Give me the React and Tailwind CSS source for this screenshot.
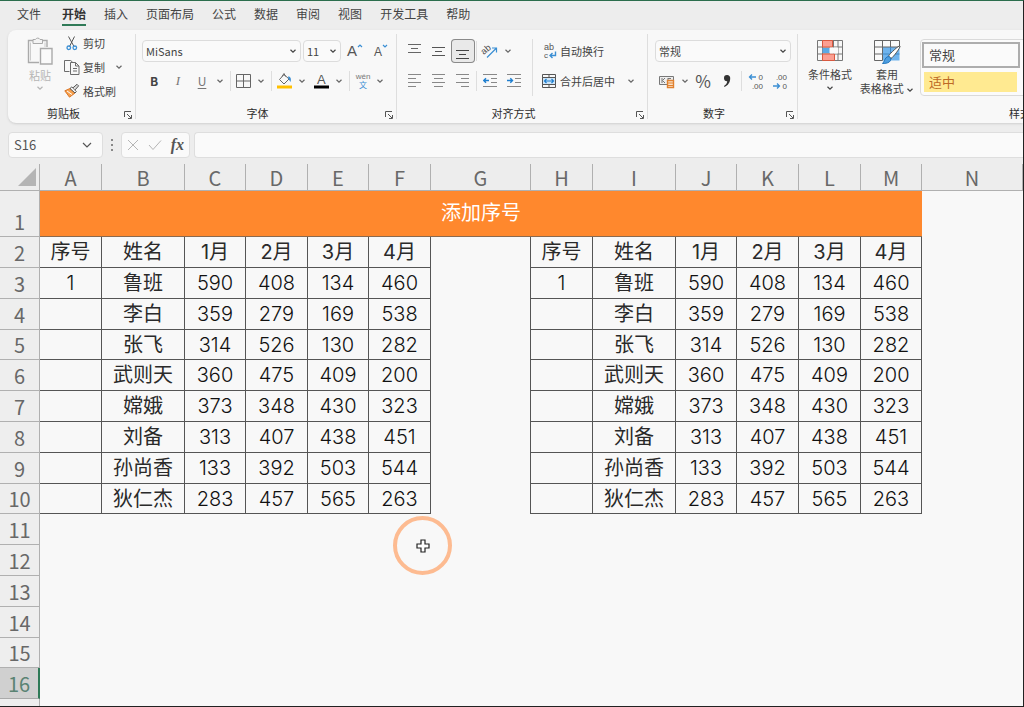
import { useState } from 'react'

const tabs = ['开始', '插入', '页面布局', '公式', '数据', '审阅', '视图', '开发工具', '帮助']

const columns = [
  { name: 'A', width: 'w-[62px]' },
  { name: 'B', width: 'w-[83px]' },
  { name: 'C', width: 'w-[61px]' },
  { name: 'D', width: 'w-[62px]' },
  { name: 'E', width: 'w-[61px]' },
  { name: 'F', width: 'w-[62px]' },
  { name: 'G', width: 'w-[100px]' },
  { name: 'H', width: 'w-[62px]' },
  { name: 'I', width: 'w-[83px]' },
  { name: 'J', width: 'w-[61px]' },
  { name: 'K', width: 'w-[62px]' },
  { name: 'L', width: 'w-[62px]' },
  { name: 'M', width: 'w-[61px]' },
  { name: 'N', width: '' },
]

const people = [
  ['序号', '姓名', '1月', '2月', '3月', '4月'],
  [1, '鲁班', 590, 408, 134, 460],
  ['', '李白', 359, 279, 169, 538],
  ['', '张飞', 314, 526, 130, 282],
  ['', '武则天', 360, 475, 409, 200],
  ['', '嫦娥', 373, 348, 430, 323],
  ['', '刘备', 313, 407, 438, 451],
  ['', '孙尚香', 133, 392, 503, 544],
  ['', '狄仁杰', 283, 457, 565, 263],
]

const emptyRows = [11, 12, 13, 14, 15, 16]

function Chevron({ className = '' }) {
  return (
    <svg viewBox="0 0 8 8" className={`w-2 h-2 ${className}`} fill="none" stroke="currentColor" strokeWidth="1.2">
      <path d="M1.5 2.8 4 5.2 6.5 2.8" />
    </svg>
  )
}

function IconButton({ label, active, children }) {
  return (
    <button
      type="button"
      aria-label={label}
      className={`w-6 h-6 flex items-center justify-center rounded ${active ? 'bg-[#e9e9e9] ring-1 ring-inset ring-[#8a8a8a]' : ''}`}
    >
      {children}
    </button>
  )
}

function MenuButton({ label }) {
  return (
    <button type="button" aria-label={label} className="w-3 h-6 flex items-center justify-center text-[#666]">
      <Chevron />
    </button>
  )
}

function SplitButton({ label, children }) {
  return (
    <div className="flex gap-[3px]">
      <button type="button" aria-label={label} className="w-4 h-6 flex items-center justify-center">{children}</button>
      <MenuButton label={`${label}选项`} />
    </div>
  )
}

function Divider({ className }) {
  return <div className={`w-px shrink-0 bg-[#dedede] ${className}`} />
}

function Select({ label, width, value, options }) {
  const [current, setCurrent] = useState(value)
  return (
    <div className={`relative ${width}`}>
      <select
        aria-label={label}
        value={current}
        onChange={e => setCurrent(e.target.value)}
        className="block appearance-none w-full h-[22px] pl-[3px] rounded border border-[#dcdcdc] bg-[#fafafa] text-[11px] outline-none"
      >
        {options.map(o => <option key={o}>{o}</option>)}
      </select>
      <Chevron className="absolute right-1 top-[7px] pointer-events-none" />
    </div>
  )
}

function Group({ title, width, launcher = true, children }) {
  return (
    <section aria-label={title} className={`relative shrink-0 flex flex-col ${width}`}>
      <div className="h-[73px]">{children}</div>
      <div className="h-5 pr-4 flex items-center">
        <span className="flex-1 text-center text-[11px] text-[#2d2d2d]">{title}</span>
      </div>
      {launcher && (
        <button type="button" aria-label={`${title}设置`} className="absolute right-[3px] bottom-1">
          <svg viewBox="0 0 8 8" className="w-2 h-2" fill="none" stroke="#555">
            <path d="M.5 6V.5H7M3 3l4 4M7.5 4v3.5H4" />
          </svg>
        </button>
      )}
    </section>
  )
}

function Clipboard() {
  return (
    <Group title="剪贴板" width="w-[127px]">
      <div className="flex pt-px">
        <button type="button" className="w-[56px] pl-2 flex flex-col items-center pt-[5px] text-[11px] text-[#b5b5b5]">
          <svg viewBox="0 0 26 30" className="w-[26px] h-[30px]" fill="none" stroke="#aaa">
            <path d="M12 26.500H1.500V4.500H6M15 4.500h5V11" strokeWidth="1.400" />
            <path d="M3.500 24.500V6.500M18 6.500V11" stroke="#ccc" />
            <path d="M6 7.500V3.500h2.500a2.500 2.500 0 0 1 4.500 0H15.500v4z" fill="#f3f3f3" />
            <path d="M13.500 12.500h11.500v15.500h-11.500z" fill="#fafafa" strokeWidth="1.400" />
          </svg>
          <span className="leading-[18px]">粘贴</span>
          <Chevron />
        </button>
        <div className="flex flex-col text-[11px]">
          <button type="button" className="h-6 flex items-center gap-[3px]">
            <svg viewBox="0 0 16 16" className="w-4 h-4" fill="none">
              <path d="M4.500 1.500 10 11.500M10.500 1.500 5.500 11.500" stroke="#555" />
              <circle cx="4.800" cy="12.800" r="1.800" stroke="#3b8fd4" strokeWidth="1.300" />
              <circle cx="10.800" cy="12.800" r="1.800" stroke="#3b8fd4" strokeWidth="1.300" />
            </svg>
            剪切
          </button>
          <div className="flex">
            <button type="button" className="h-6 flex items-center gap-[3px]">
              <svg viewBox="0 0 16 16" className="w-4 h-4" fill="none" stroke="#6c6c6c">
                <path d="M5.500 12.500h-5v-11h6l2 1.500" />
                <path d="M6.500 3.500h5l3.500 3.500v8.500H6.500zM11.500 3.500V7H15M9 9.500h4M9 12h4" />
              </svg>
              复制
            </button>
            <span className="ml-2"><MenuButton label="复制选项" /></span>
          </div>
          <button type="button" className="h-6 flex items-center gap-[3px]">
            <svg viewBox="0 0 16 16" className="w-4 h-4" fill="none">
              <path d="M6 5.500.8 7.800l4.700 6.400L11 10z" fill="#f6a04d" stroke="#d9772b" />
              <path d="m6 5.500 1.800-1.600 4.500 4.700L11 10z" fill="#fff" stroke="#555" />
              <path d="m9 4.800 4-3.500 1.600 1.600-3.500 4" fill="#ddd" stroke="#555" />
              <path d="m3 8 5 3.500" stroke="#fff" />
            </svg>
            格式刷
          </button>
        </div>
      </div>
    </Group>
  )
}

function FontGroup() {
  return (
    <Group title="字体" width="w-[261px]">
      <div className="pl-[7px] pt-[10px] flex flex-col gap-[7px]">
        <div className="h-[22px] flex items-center gap-[2px]">
          <Select label="字体名称" width="w-[159px]" value="MiSans" options={['MiSans', 'Arial']} />
          <Select label="字号" width="w-[38px]" value="11" options={['10', '11', '12']} />
          <IconButton label="增大字号">
            <svg viewBox="0 0 18 20" className="w-[18px] h-5 font-['Liberation_Sans',sans-serif]">
              <text x="1" y="15" fontSize="15" fill="#555">A</text>
              <path d="m12 6 2-2 2 2" fill="none" stroke="#3b8fd4" strokeWidth="1.200" />
            </svg>
          </IconButton>
          <IconButton label="减小字号">
            <svg viewBox="0 0 18 20" className="w-[18px] h-5 font-['Liberation_Sans',sans-serif]">
              <text x="2" y="15" fontSize="12" fill="#555">A</text>
              <path d="m11 4 2 2 2-2" fill="none" stroke="#3b8fd4" strokeWidth="1.200" />
            </svg>
          </IconButton>
        </div>
        <div className="h-6 flex items-center">
          <IconButton label="加粗"><b className="text-xs">B</b></IconButton>
          <IconButton label="倾斜"><i className="text-[13px] text-[#777] font-['Liberation_Serif',serif]">I</i></IconButton>
          <IconButton label="下划线"><u className="text-xs text-[#777] underline-offset-2">U</u></IconButton>
          <MenuButton label="下划线选项" />
          <Divider className="ml-1 mr-[5px] h-5" />
          <SplitButton label="边框">
            <svg viewBox="0 0 16 16" className="w-4 h-4" fill="none" stroke="#666">
              <path d="M.5 1.500h14v13H.5zM7.500 1.500v13M.5 8h14" />
            </svg>
          </SplitButton>
          <Divider className="ml-1 mr-[5px] h-5" />
          <div className="flex gap-[6px]">
            <SplitButton label="填充颜色">
              <svg viewBox="0 0 16 18" className="w-4 h-[18px]" fill="none">
                <path d="M7 2.500 12 7l-5 5-4.500-4.500zM5 4.500l2-3 1.500 3" stroke="#666" />
                <path d="M11 4.500c2.500 0 3.500 2 2.500 5.500L11.500 7z" fill="#3b8fd4" />
                <path d="M0 13.500h15v3H0z" fill="#ffc000" />
              </svg>
            </SplitButton>
            <SplitButton label="字体颜色">
              <svg viewBox="0 0 16 18" className="w-4 h-[18px] font-['Liberation_Sans',sans-serif]">
                <text x="3" y="12" fontSize="13" fill="#555">A</text>
                <path d="M0 13.500h15v3H0z" fill="#000" />
              </svg>
            </SplitButton>
          </div>
          <Divider className="ml-1 mr-[5px] h-5" />
          <SplitButton label="拼音">
            <span className="flex flex-col items-center text-[8px] leading-[9px] text-[#777] font-['Liberation_Sans','Noto_Sans_CJK_SC',sans-serif]">
              wén<span className="text-[#3b8fd4]">文</span>
            </span>
          </SplitButton>
        </div>
      </div>
    </Group>
  )
}

function Lines({ d, color = '#888' }) {
  return (
    <svg viewBox="0 0 14 16" className="w-[14px] h-4" fill="none" stroke={color}>
      <path d={d} />
    </svg>
  )
}

function Alignment() {
  return (
    <Group title="对齐方式" width="w-[251px]">
      <div className="flex pl-[7px] pt-[9px]">
        <div className="flex flex-col gap-[6px]">
          <div className="flex items-center">
            <IconButton label="顶端对齐"><Lines color="#666" d="M0 1.500h13M3 5.500h7M0 9.500h13" /></IconButton>
            <IconButton label="垂直居中"><Lines color="#555" d="M0 4.500h13M3 8.500h7M0 12.500h13" /></IconButton>
            <IconButton label="底端对齐" active><Lines color="#444" d="M0 7.500h13M3 11.500h7M0 15.500h13" /></IconButton>
            <Divider className="mx-px h-5" />
            <IconButton label="方向">
              <svg viewBox="0 0 20 20" className="w-5 h-5 font-['Liberation_Sans',sans-serif]" fill="none">
                <text x="2" y="11" fontSize="9" fill="#444" transform="rotate(-40 7 10)">ab</text>
                <path d="M7 16.500 16 7.500M12 7h4.500v4.500" stroke="#3b8fd4" strokeWidth="1.200" />
              </svg>
            </IconButton>
            <MenuButton label="方向选项" />
          </div>
          <div className="flex items-center">
            <IconButton label="左对齐"><Lines d="M0 1.500h13M0 5.500h8M0 9.500h13M0 13.500h8" /></IconButton>
            <IconButton label="居中"><Lines d="M0 1.500h13M2 5.500h9M0 9.500h13M2 13.500h9" /></IconButton>
            <IconButton label="右对齐"><Lines d="M0 1.500h13M5 5.500h8M0 9.500h13M5 13.500h8" /></IconButton>
            <Divider className="mx-px h-5" />
            <IconButton label="减少缩进量">
              <svg viewBox="0 0 14 16" className="w-[14px] h-4" fill="none" stroke="#888">
                <path d="M0 1.500h14M8 5.500h6M8 9.500h6M0 13.500h14" />
                <path d="M6 7.500H.8M3 5.200.8 7.500 3 9.800" stroke="#1f7fd0" strokeWidth="1.400" />
              </svg>
            </IconButton>
            <IconButton label="增加缩进量">
              <svg viewBox="0 0 14 16" className="w-[14px] h-4" fill="none" stroke="#888">
                <path d="M0 1.500h14M8 5.500h6M8 9.500h6M0 13.500h14" />
                <path d="M0 7.500h5.500M3.300 5.200l2.200 2.300-2.200 2.300" stroke="#1f7fd0" strokeWidth="1.400" />
              </svg>
            </IconButton>
          </div>
        </div>
        <Divider className="ml-[6px] mr-2 h-[57px]" />
        <div className="flex flex-col gap-[6px] text-[11px]">
          <button type="button" className="h-6 flex items-center gap-[3px]">
            <svg viewBox="0 0 16 20" className="w-4 h-5 font-['Liberation_Sans',sans-serif]" fill="none">
              <text x="3" y="9" fontSize="9" fill="#555">ab</text>
              <text x="3" y="17" fontSize="8" fill="#555">c</text>
              <path d="M14.500 10.500V14.500H9M11.500 12l-2.500 2.500 2.500 2.500" stroke="#3b8fd4" strokeWidth="1.400" />
            </svg>
            自动换行
          </button>
          <div className="flex">
            <button type="button" className="h-6 flex items-center gap-[3px]">
              <svg viewBox="0 0 16 16" className="w-4 h-4" fill="none" stroke="#555">
                <path d="M1.500 1.500h13v13h-13zM8 1.500v3M8 11.500v3" />
                <path d="M1.500 4.500h13v7h-13z" fill="#cfe6f8" />
                <path d="M3.500 8h9M5.500 6l-2 2 2 2M10.500 6l2 2-2 2" stroke="#1f7fd0" strokeWidth="1.200" />
              </svg>
              合并后居中
            </button>
            <span className="ml-[10px]"><MenuButton label="合并选项" /></span>
          </div>
        </div>
      </div>
    </Group>
  )
}

function NumberGroup() {
  return (
    <Group title="数字" width="w-[150px]">
      <div className="pl-2 pt-[10px] flex flex-col gap-[7px]">
        <Select label="数字格式" width="w-[136px]" value="常规" options={['常规', '数值', '货币']} />
        <div className="h-6 flex items-center">
          <IconButton label="会计数字格式">
            <svg viewBox="0 0 16 16" className="w-4 h-4" fill="none">
              <path d="M.5 3.500h14v8H.5z" stroke="#777" fill="#eee" />
              <path d="M3 5v5M6 5 3.500 7.500 6 10M9 5v5M12 5.500H9" stroke="#777" />
              <path d="M8.500 7.500h6v7h-6z" fill="#fde3c8" stroke="#e0812f" strokeWidth="1.400" />
              <path d="M8.500 10h6M8.500 12.500h6" stroke="#e0812f" />
            </svg>
          </IconButton>
          <MenuButton label="会计格式选项" />
          <IconButton label="百分比样式"><span className="text-[17px] text-[#555]">%</span></IconButton>
          <IconButton label="千位分隔样式">
            <svg viewBox="0 0 8 14" className="w-2 h-[14px]">
              <path d="M4 1a3 3 0 0 1 3.200 3.300C7.200 8.500 5 11.500 1.500 13l-.5-1c2-1.200 3-2.800 3.200-4.800A3 3 0 1 1 4 1z" fill="#333" />
            </svg>
          </IconButton>
          <Divider className="mx-[2px] h-5" />
          <IconButton label="增加小数位数">
            <svg viewBox="0 0 16 20" className="w-4 h-5 font-['Liberation_Sans',sans-serif]" fill="none" textAnchor="end">
              <text x="15" y="9" fontSize="8" fill="#555">0</text>
              <text x="15" y="18" fontSize="8" fill="#555">.00</text>
              <path d="M8 6H1.500M4 3.500 1.500 6 4 8.500" stroke="#3b8fd4" strokeWidth="1.300" />
            </svg>
          </IconButton>
          <IconButton label="减少小数位数">
            <svg viewBox="0 0 16 20" className="w-4 h-5 font-['Liberation_Sans',sans-serif]" fill="none" textAnchor="end">
              <text x="15" y="9" fontSize="8" fill="#555">.00</text>
              <text x="15" y="18" fontSize="8" fill="#555">0</text>
              <path d="M1 15h6.500M5 12.500 7.500 15 5 17.500" stroke="#3b8fd4" strokeWidth="1.300" />
            </svg>
          </IconButton>
        </div>
      </div>
    </Group>
  )
}

function Styles() {
  return (
    <Group title="样式" width="w-[462px]" launcher={false}>
      <div className="flex items-start pt-[9px] pl-[9px] text-[11px] leading-[14px]">
        <button type="button" className="w-[48px] flex flex-col items-center gap-1">
          <svg viewBox="0 0 26 24" className="w-[26px] h-6" fill="none">
            <path d="M.5 1.500h25v20H.5zM.5 8h25M.5 15h25M5.500 1.500v20M16.500 1.500v20M21 1.500v20" stroke="#777" />
            <path d="M5.500 1.500h10V8h-10zM5.500 15h12v6.500h-12z" fill="#fb9f92" stroke="#d8583f" />
            <path d="M13 8.500h8v6h-8z" fill="#fafafa" />
            <path d="M5.500 9h7v5h-7z" fill="#5ba9e6" />
          </svg>
          <span className="flex flex-col items-center gap-[3px] whitespace-nowrap">条件格式<Chevron /></span>
        </button>
        <button type="button" className="ml-1 w-[58px] flex flex-col items-center gap-1">
          <svg viewBox="0 0 28 26" className="w-7 h-[26px] -mb-[2px]" fill="none">
            <path d="M9.500 1.500h17V8h-17zM1.500 1.500h8v20h-8z" fill="#fafafa" />
            <path d="M9.500 8h17v13.500h-17z" fill="#6fb4ee" />
            <path d="M1.500 21.500v-20h25v6.500M1.500 8h25M1.500 15h8M1.500 21.500h8M9.500 1.500v20M17.500 1.500V8" stroke="#666" />
            <path d="M9.500 15h17M17.500 8v13.500" stroke="#4088c4" />
            <path d="M27 7c1 1-7 11.500-9 12.500l-2.500-2.500C17 14.500 26 6 27 7z" fill="#fff" stroke="#555" />
            <path d="M15 17.500c2 0 3.500 2 2.500 4-1 2.500-5 3-8 3 2-1.500 2-6 5.500-7z" fill="#4d9ee0" stroke="#2577bd" />
          </svg>
          <span className="whitespace-nowrap">套用<br />表格格式 <Chevron className="inline" /></span>
        </button>
        <div className="ml-1 flex-1 h-[57px] rounded border border-[#dadada] bg-[#fbfbfb] flex flex-col items-start gap-1 pt-[2px] pl-px text-[13px]">
          <button type="button" className="w-[98px] h-[26px] pl-[5px] text-left border-2 border-[#adadad] bg-[#fafafa] text-[#444]">常规</button>
          <button type="button" className="w-[93px] h-5 ml-[2px] pl-[5px] text-left bg-[#ffea91] text-[#bd6a26]">适中</button>
        </div>
      </div>
    </Group>
  )
}

function FormulaBar() {
  return (
    <div className="mt-[9px] h-[26px] pl-2 flex items-stretch text-[#555]">
      <div className="w-[95px] flex items-center rounded border border-[#dedede] bg-[#fafafa]">
        <input aria-label="名称框" defaultValue="S16" className="w-0 flex-1 pl-[5px] text-[13px] outline-none" />
        <button type="button" aria-label="名称列表" className="w-5">
          <svg viewBox="0 0 10 8" className="w-[10px] h-2" fill="none" stroke="#555" strokeWidth="1.200">
            <path d="m1 2 4 4 4-4" />
          </svg>
        </button>
      </div>
      <div className="w-[18px] flex flex-col items-center justify-center gap-[3px]">
        <i className="w-[2px] h-[2px] bg-[#888]" />
        <i className="w-[2px] h-[2px] bg-[#888]" />
        <i className="w-[2px] h-[2px] bg-[#888]" />
      </div>
      <div className="w-[69px] px-[5px] flex items-center justify-between rounded border border-[#dedede] bg-[#fafafa]">
        <button type="button" aria-label="取消">
          <svg viewBox="0 0 12 12" className="w-3 h-3" stroke="#b5b5b5"><path d="m1 1 10 10M11 1 1 11" /></svg>
        </button>
        <button type="button" aria-label="输入">
          <svg viewBox="0 0 14 12" className="w-[14px] h-3" fill="none" stroke="#b5b5b5"><path d="m1 6 4 4.500L13 1.500" /></svg>
        </button>
        <button type="button" aria-label="插入函数" className="font-['Liberation_Serif',serif] italic font-bold text-base leading-5">fx</button>
      </div>
      <input aria-label="编辑栏" className="ml-1 flex-1 min-w-0 px-2 rounded-l border border-r-0 border-[#dedede] bg-[#fafafa] text-[13px] outline-none" />
    </div>
  )
}

function RowHeader({ n, active }) {
  return (
    <th
      scope="row"
      className={`p-0 border-b font-normal align-bottom leading-[28px] ${active ? 'bg-[#d0d0d0] text-[#5a8373] border-r-2 border-b-[#aaa] border-r-[#2f7a57]' : 'bg-[#eeeeee] text-[#686868] border-r border-[#b0b0b0]'}`}
    >
      {n}
    </th>
  )
}

function Cells({ row }) {
  return row.map((value, i) => (
    <td
      key={i}
      className={`p-0 border-r border-b border-[#555] font-['Inter','Noto_Sans_CJK_SC',sans-serif] ${typeof value === 'number' ? 'font-light text-[#111]' : 'text-[#2a2a2a]'}`}
    >
      {value}
    </td>
  ))
}

function Sheet() {
  return (
    <div className="relative mt-[6px] flex-1 min-h-0 overflow-hidden bg-[#f8f8f8]">
      <table className="w-full table-fixed border-separate border-spacing-0 text-center text-[20px] leading-5">
        <colgroup>
          <col className="w-10" />
          {columns.map(c => <col key={c.name} className={c.width} />)}
        </colgroup>
        <thead className="bg-[#ededed] text-[#686868]">
          <tr className="h-[27px]">
            <th aria-label="全选" className="p-0 border-r border-b border-[#b0b0b0]">
              <svg viewBox="0 0 18 18" className="w-[18px] h-[18px] ml-[18px]"><path d="M18 0v18H0z" fill="#b4b4b4" /></svg>
            </th>
            {columns.map(c => (
              <th key={c.name} scope="col" className="p-0 pt-px border-r border-b border-[#b0b0b0] font-normal">{c.name}</th>
            ))}
          </tr>
        </thead>
        <tbody>
          <tr className="h-[46px]">
            <RowHeader n={1} />
            <td colSpan={13} className="p-0 pb-[3px] bg-[#ff882d] border-b border-[#8a6a50] text-white">添加序号</td>
            <td />
          </tr>
          {people.map((row, i) => (
            <tr key={i} className="h-[31px] nth-[5n]:h-[30px]">
              <RowHeader n={i + 2} />
              <Cells row={row} />
              <td className="p-0 border-r border-[#555]" />
              <Cells row={row} />
              <td />
            </tr>
          ))}
          {emptyRows.map(n => (
            <tr key={n} className="h-[31px] nth-[5n]:h-[30px]">
              <RowHeader n={n} active={n === 16} />
              <td colSpan={14} />
            </tr>
          ))}
          <tr className="h-[31px]">
            <RowHeader />
            <td colSpan={14} />
          </tr>
        </tbody>
      </table>
      {/* click highlight with the cell cursor in it */}
      <div className="absolute left-[393px] top-[352px] w-[59px] h-[59px] rounded-full border-4 border-[#fdbb91] flex items-center justify-center">
        <svg viewBox="0 0 16 16" className="w-4 h-4">
          <path d="M6 2h4v4h4v4h-4v4H6v-4H2V6h4z" fill="#fff" stroke="#222" strokeWidth="1.200" />
        </svg>
      </div>
    </div>
  )
}

export default function App() {
  const [tab, setTab] = useState('开始')

  return (
    <div className="h-screen flex flex-col overflow-hidden bg-[#ededed] border-t border-t-[#2b6e4d] border-r border-b border-r-[#222] border-b-[#222] text-[#444] font-['Noto_Sans_CJK_SC',sans-serif]">
      <header className="h-[29px] shrink-0 pl-[17px] flex items-start gap-[21px] text-xs">
        <button type="button" className="h-[25px] pt-0.5 border-b-2 border-transparent">文件</button>
        <nav className="flex gap-[18px]">
          {tabs.map(t => (
            <button
              key={t}
              type="button"
              onClick={() => setTab(t)}
              className={`h-[25px] pt-0.5 whitespace-nowrap border-b-2 ${t === tab ? 'font-bold text-[#333] border-[#2f7a57]' : 'border-transparent'}`}
            >
              {t}
            </button>
          ))}
        </nav>
      </header>
      <div className="ml-2 shrink-0 flex overflow-hidden rounded-l-lg bg-[#f8f8f8] shadow-sm">
        <Clipboard />
        <Divider className="-mr-px my-1" />
        <FontGroup />
        <Divider className="-mr-px my-1" />
        <Alignment />
        <Divider className="-mr-px my-1" />
        <NumberGroup />
        <Divider className="-mr-px my-1" />
        <Styles />
      </div>
      <FormulaBar />
      <Sheet />
    </div>
  )
}
